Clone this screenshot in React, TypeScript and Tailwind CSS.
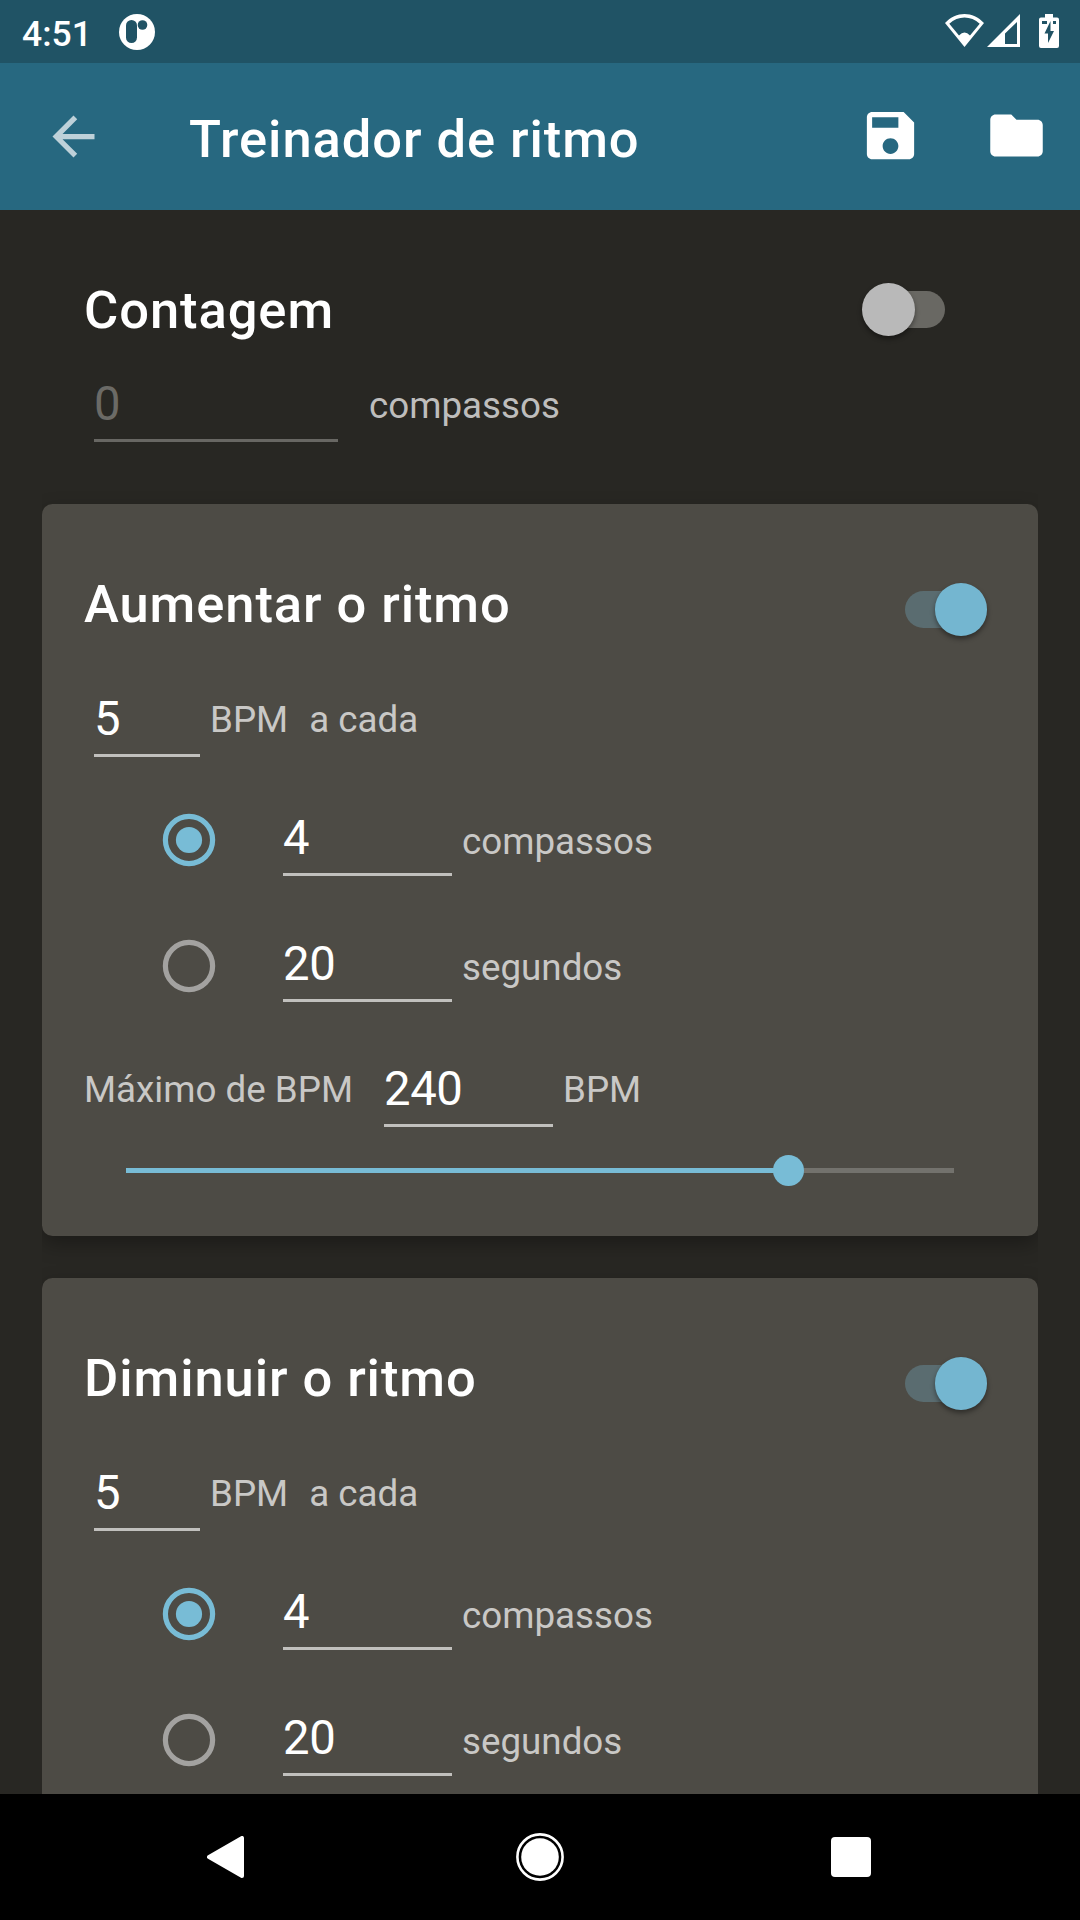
import { useState } from "react";

interface ToggleProps {
  checked: boolean;
  onChange: (checked: boolean) => void;
}

function Toggle({ checked, onChange }: ToggleProps) {
  return (
    <button
      role="switch"
      aria-checked={checked}
      onClick={() => onChange(!checked)}
      className="relative flex h-[70px] w-[82px] items-center"
    >
      <span
        className={
          checked
            ? "h-[37px] w-[74px] rounded-full bg-[#5a6c70]"
            : "ml-auto h-[37px] w-[74px] rounded-full bg-[#696863]"
        }
      />
      <span
        className={
          checked
            ? "absolute top-[9px] right-0 size-[52.5px] rounded-full bg-[#74b6d0] shadow-[0_3px_5px_rgba(0,0,0,0.4)]"
            : "absolute top-[9px] -left-px size-[52.5px] rounded-full bg-[#b9b9b9] shadow-[0_3px_5px_rgba(0,0,0,0.4)]"
        }
      />
    </button>
  );
}

interface FieldProps {
  value: string;
  width: string;
  disabled?: boolean;
}

/** Number with an underline below it. */
function Field({ value, width, disabled }: FieldProps) {
  return (
    <div
      className={`${width} h-[62px] shrink-0 border-b-3 text-[47.25px] leading-[48px] tracking-[-0.4px] ${
        disabled ? "border-[#686763] text-[#6b6a66]" : "border-[#c1c0bd] text-white"
      }`}
    >
      {value}
    </div>
  );
}

function Radio({ checked }: { checked: boolean }) {
  return (
    <svg viewBox="0 0 54 54" className="-mt-px size-[54px] shrink-0">
      <circle cx="27" cy="27" r="23.6" fill="none" stroke={checked ? "#78bcd6" : "#a3a2a0"} strokeWidth="5.2" />
      {checked && <circle cx="27" cy="27" r="13.1" fill="#78bcd6" />}
    </svg>
  );
}

function Slider({ value, max }: { value: number; max: number }) {
  const percent = `${(value / max) * 100}%`;
  return (
    <div className="relative mt-[28px] ml-[42px] flex h-[31px] w-[828px] items-center">
      <div className="h-[5px] w-full bg-[#73726d]">
        <div className="h-full bg-[#78bcd6]" style={{ width: percent }} />
      </div>
      <div
        className="absolute top-0 size-[31px] -translate-x-[15px] rounded-full bg-[#78bcd6]"
        style={{ left: percent }}
      />
    </div>
  );
}

interface TempoCardProps {
  title: string;
  limit?: { label: string; bpm: number };
}

function TempoCard({ title, limit }: TempoCardProps) {
  const [enabled, setEnabled] = useState(true);
  const [unit, setUnit] = useState("bars");

  return (
    <section className="h-[732px] shrink-0 rounded-[10.5px] bg-[#4d4b45] px-[42px] pt-[70px] shadow-[0_8px_20px_rgba(0,0,0,0.3)]">
      <div className="flex h-[70px] items-start justify-between pr-[9px]">
        <h2 className="text-[52.5px] leading-[60px] font-medium tracking-[0.92px] text-white">{title}</h2>
        <Toggle checked={enabled} onChange={setEnabled} />
      </div>

      <div className="mt-[51px] flex pl-[10px]">
        <Field value="5" width="w-[106px]" />
        <span className="ml-[10px] pt-px">BPM</span>
        <span className="ml-[21px] pt-px">a cada</span>
      </div>

      <div className="mt-[57px] flex pl-[78px]" onClick={() => setUnit("bars")}>
        <Radio checked={unit === "bars"} />
        <div className="w-[67px]" />
        <Field value="4" width="w-[169px]" />
        <span className="ml-[10px] pt-1">compassos</span>
      </div>

      <div className="mt-[64px] flex pl-[78px]" onClick={() => setUnit("seconds")}>
        <Radio checked={unit === "seconds"} />
        <div className="w-[67px]" />
        <Field value="20" width="w-[169px]" />
        <span className="ml-[10px] pt-1">segundos</span>
      </div>

      {limit && (
        <>
          <div className="mt-[63px] flex">
            <span className="w-[300px] pt-px">{limit.label}</span>
            <Field value={String(limit.bpm)} width="w-[169px]" />
            <span className="ml-[10px] pt-px">BPM</span>
          </div>
          <Slider value={limit.bpm} max={300} />
        </>
      )}
    </section>
  );
}

function StatusBar() {
  return (
    <div className="flex h-[63px] items-start bg-[#205365] text-white">
      <span className="w-[119px] pt-[11px] pl-[22px] text-[35.5px] leading-[46px] font-medium">4:51</span>
      <svg viewBox="0 0 36 36" className="mt-[14px] size-[36px]">
        <circle cx="18" cy="18" r="18" fill="#fff" />
        <rect x="7" y="6" width="11" height="23" rx="5.5" fill="#205365" />
        <circle cx="23.5" cy="11" r="4.8" fill="#205365" />
      </svg>
      <div className="mt-[14px] mr-[21px] ml-auto flex">
        <svg viewBox="0 0 39 34" className="h-[34px] w-[39px]" fill="#fff">
          <path
            fillRule="evenodd"
            d="M0 9C11-3 28-3 39 9L19.5 33ZM4.300 9.700L14 21.500Q19.500 15.500 25 21.500L34.700 9.700C26 1.500 13 1.500 4.300 9.700Z"
          />
        </svg>
        <svg viewBox="0 0 33 34" className="ml-[3px] h-[34px] w-[33px]" fill="#fff">
          <path fillRule="evenodd" d="M33 0V33H0ZM30 8L18 19.500V30H30Z" />
        </svg>
        <svg viewBox="0 0 20 34" className="ml-[19px] h-[34px] w-[20px]">
          <path fill="#fff" d="M6 0H14V3.500H18Q20 3.500 20 5.500V32Q20 34 18 34H2Q0 34 0 32V5.500Q0 3.500 2 3.500H6Z" />
          <path fill="#205365" d="M3 7H8V10H3ZM14 7H17V10H14ZM11.500 7L5.500 19.500H9V29L15 17H11.500Z" />
        </svg>
      </div>
    </div>
  );
}

function AppBar() {
  return (
    <header className="flex h-[147px] items-center bg-[#276880] pr-[32px] pl-[42px] text-white">
      <svg viewBox="0 0 24 24" className="size-[63px]" fill="#bed1d9">
        <path d="M20 11H7.83l5.59-5.59L12 4l-8 8 8 8 1.41-1.41L7.83 13H20v-2z" />
      </svg>
      <h1 className="ml-[84px] pt-[4px] text-[52.5px] leading-[62px] font-medium tracking-[0.92px]">
        Treinador de ritmo
      </h1>
      <svg viewBox="0 0 24 24" className="mb-[2px] ml-auto size-[63px]" fill="#fff">
        <path d="M17 3H5c-1.110 0-2 .9-2 2v14c0 1.100.89 2 2 2h14c1.100 0 2-.9 2-2V7l-4-4zm-5 16c-1.660 0-3-1.340-3-3s1.340-3 3-3 3 1.340 3 3-1.340 3-3 3zm3-10H5V5h10v4z" />
      </svg>
      <svg viewBox="0 0 24 24" className="mb-[2px] ml-[63px] size-[63px]" fill="#fff">
        <path d="M10 4H4c-1.100 0-1.990.9-1.990 2L2 18c0 1.100.9 2 2 2h16c1.100 0 2-.9 2-2V8c0-1.100-.9-2-2-2h-8l-2-2z" />
      </svg>
    </header>
  );
}

function NavBar() {
  return (
    <nav className="flex h-[126px] items-center bg-black pl-[207px]">
      <svg viewBox="0 0 37 42" className="h-[42px] w-[37px]">
        <path d="M35 2V40L2 21Z" fill="#fff" stroke="#fff" strokeWidth="4" strokeLinejoin="round" />
      </svg>
      <svg viewBox="0 0 48 48" className="ml-[272px] size-[48px]">
        <circle cx="24" cy="24" r="22.6" fill="none" stroke="#fff" strokeWidth="2.600" />
        <circle cx="24" cy="24" r="18.8" fill="#fff" />
      </svg>
      <div className="ml-[267px] size-[40px] rounded-[4px] bg-white" />
    </nav>
  );
}

export default function App() {
  const [countIn, setCountIn] = useState(false);

  return (
    <div className="flex h-[1920px] w-[1080px] flex-col overflow-hidden bg-[#282723] font-['Roboto',sans-serif]">
      <StatusBar />
      <AppBar />

      <main className="mx-[42px] flex h-[1584px] flex-col gap-[42px] overflow-hidden text-[36.75px] leading-[48px] text-[#c9c8c6]">
        <section className="h-[252px] shrink-0 px-[42px] pt-[64px]">
          <div className="flex h-[70px] items-start justify-between pr-[51px]">
            <h2 className="pt-[3px] text-[52.5px] leading-[66px] font-medium tracking-[0.92px] text-white">Contagem</h2>
            <Toggle checked={countIn} onChange={setCountIn} />
          </div>
          <div className="mt-[36px] flex pl-[10px]">
            <Field value="0" width="w-[244px]" disabled />
            <span className="ml-[31px] pt-[2px] text-[#bebdbc]">compassos</span>
          </div>
        </section>

        <TempoCard title="Aumentar o ritmo" limit={{ label: "Máximo de BPM", bpm: 240 }} />
        <TempoCard title="Diminuir o ritmo" />
      </main>

      <NavBar />
    </div>
  );
}
